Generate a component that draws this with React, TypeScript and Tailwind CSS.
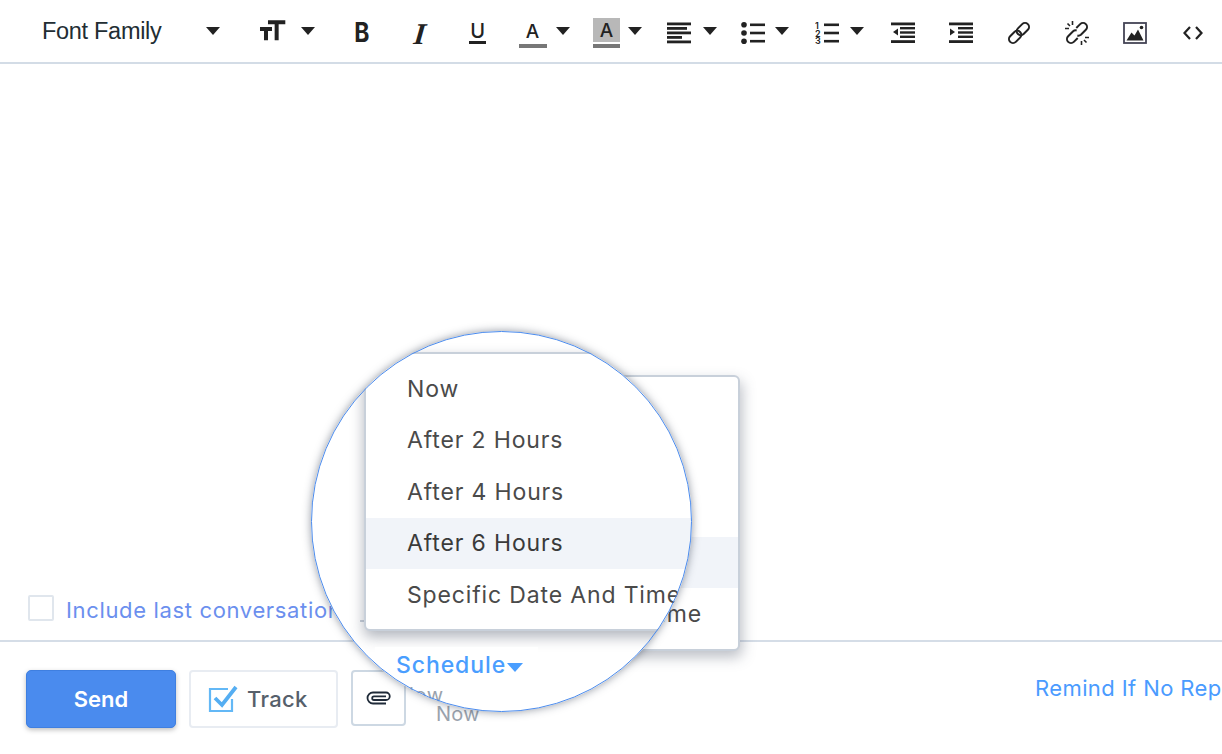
import React from "react";
import { MdFormatSize } from "react-icons/md";

const Caret = ({ className = "" }: { className?: string }) => (
  <svg width="14" height="8" viewBox="0 0 14 8" className={className}>
    <path d="M0 0h14L7 8z" fill="#222" />
  </svg>
);

const IconBox = ({ children, className = "" }: { children: React.ReactNode; className?: string }) => (
  <span className={`mt-[4px] flex h-[40px] items-center justify-center ${className}`}>{children}</span>
);

const AlignIcon = () => (
  <svg width="24" height="22" viewBox="0 0 24 22" fill="#222">
    <rect x="0" y="0.500" width="24" height="2.800" />
    <rect x="0" y="5" width="20" height="2.800" />
    <rect x="0" y="9.500" width="24" height="2.800" />
    <rect x="0" y="14" width="15" height="2.800" />
    <rect x="0" y="18.500" width="24" height="2.800" />
  </svg>
);

const BulletIcon = () => (
  <svg width="24" height="22" viewBox="0 0 24 22" fill="#222">
    <circle cx="3" cy="2.800" r="2.800" />
    <circle cx="3" cy="11" r="2.800" />
    <circle cx="3" cy="19.200" r="2.800" />
    <rect x="9" y="1.500" width="15" height="2.600" />
    <rect x="9" y="9.700" width="15" height="2.600" />
    <rect x="9" y="17.900" width="15" height="2.600" />
  </svg>
);

const NumberIcon = () => (
  <svg width="24" height="26" viewBox="0 0 24 26" fill="#222">
    <text x="0" y="9" fontSize="9" fontWeight="600" fontFamily="Inter, sans-serif">1</text>
    <text x="0" y="16.500" fontSize="9" fontWeight="600" fontFamily="Inter, sans-serif">2</text>
    <text x="0" y="24" fontSize="9" fontWeight="600" fontFamily="Inter, sans-serif">3</text>
    <rect x="9" y="3.500" width="15" height="2.600" />
    <rect x="9" y="11.700" width="15" height="2.600" />
    <rect x="9" y="19.900" width="15" height="2.600" />
  </svg>
);

const IndentIcon = ({ dir }: { dir: "in" | "out" }) => (
  <svg width="24" height="22" viewBox="0 0 24 22" fill="#222">
    <rect x="0" y="0.500" width="24" height="2.800" />
    <rect x="9" y="5" width="15" height="2.400" />
    <rect x="9" y="9.300" width="15" height="2.400" />
    <rect x="9" y="13.600" width="15" height="2.400" />
    <rect x="0" y="18.200" width="24" height="2.800" />
    {dir === "out" ? <path d="M7 6.500v7L2 10z" /> : <path d="M1 6.500v7L6 10z" />}
  </svg>
);

const LinkIcon = () => (
  <svg width="26" height="26" viewBox="0 0 26 26" fill="none" stroke="#222" strokeWidth="2">
    <g transform="rotate(45 13 13)">
      <rect x="9" y="0.500" width="8" height="14" rx="4" />
      <rect x="9" y="11.500" width="8" height="14" rx="4" />
    </g>
  </svg>
);

const UnlinkIcon = () => (
  <svg width="26" height="26" viewBox="0 0 26 26" fill="none" stroke="#222" strokeWidth="2">
    <g transform="rotate(45 13 13)">
      <path d="M9 10V4.500a4 4 0 0 1 8 0v7a4 4 0 0 1-2 3" />
      <path d="M17 16v5.500a4 4 0 0 1-8 0v-7a4 4 0 0 1 2-3" />
    </g>
    <path d="M8.500 1v4M1 8.500h4M3.500 3.500l2.500 2.500M25 17.500h-4M17.500 25v-4M22.500 22.500L20 20" strokeWidth="1.600" />
  </svg>
);

const ImageIcon = () => (
  <svg width="24" height="22" viewBox="0 0 24 22">
    <rect x="1" y="1" width="22" height="20" fill="none" stroke="#445" strokeWidth="1.800" />
    <path d="M3.500 18.500l5-8 3 3 3.500-6 5.500 11z" fill="#222" />
    <circle cx="18.500" cy="5.500" r="1.800" fill="#222" />
  </svg>
);

const CodeIcon = () => (
  <svg width="20" height="14" viewBox="0 0 20 14" fill="none" stroke="#222" strokeWidth="2.200">
    <path d="M7 1L1.500 7 7 13M13 1l5.500 6L13 13" />
  </svg>
);

const ClipIcon = () => (
  <svg width="26" height="14" viewBox="0 0 26 14" fill="none" stroke="#1f2a38" strokeWidth="1.800">
    <path d="M20 12.500H7a5.500 5.500 0 0 1 0-11h13a3.750 3.750 0 0 1 0 7.500H8a1.800 1.800 0 0 1 0-3.600h12" />
  </svg>
);

const TrackIcon = () => (
  <svg width="30" height="30" viewBox="0 0 30 30" fill="none">
    <path d="M24 15v12H2V5h18" stroke="#63b8f6" strokeWidth="2.200" />
    <path d="M7 14l7 7L28 3" stroke="#55aef2" strokeWidth="3.800" />
  </svg>
);

const items = ["Now", "After 2 Hours", "After 4 Hours", "After 6 Hours", "Specific Date And Time"];

const Menu = ({ className }: { className: string }) => (
  <div className={className}>
    {items.map((t, i) => (
      <div
        key={t}
        className={`flex h-[51.5px] items-center whitespace-nowrap pl-[41px] text-[23px] tracking-[0.85px] ${
          i === 3 ? "bg-[#f1f4f9] text-[#3a3a3a]" : "text-[#4a4a4a]"
        }`}
      >
        {t}
      </div>
    ))}
  </div>
);

const sans = { fontFamily: 'Inter, "Noto Sans", sans-serif' };

export default function App() {
  return (
    <div style={sans} className="relative flex h-[754px] w-[1222px] flex-col overflow-hidden bg-white">
      <div className="flex h-[64px] shrink-0 items-center border-b-2 border-[#d3dce6] pl-[42px]">
        <span
          className="mt-[2px] w-[164px] whitespace-nowrap text-[23.500px] tracking-[-0.3px] text-[#222d33]"
          style={{ fontFamily: '"Liberation Sans", Arial, sans-serif' }}
        >
          Font Family
        </span>
        <Caret />
        <MdFormatSize size={32} className="ml-[36px] text-[#222]" />
        <Caret className="ml-[13px]" />
        <IconBox className="ml-[18px] w-[58px]">
          <span className="scale-x-[0.85] text-[27px] font-bold text-[#222]">B</span>
        </IconBox>
        <IconBox className="w-[58px]">
          <span className="-skew-x-6 text-[30px] font-bold italic text-[#222]" style={{ fontFamily: '"Liberation Serif", serif' }}>I</span>
        </IconBox>
        <IconBox className="w-[58px]">
          <span className="border-b-[3px] border-[#222] px-[1px] text-[20px] font-medium leading-[19px] text-[#222]">U</span>
        </IconBox>
        <span className="ml-[12px] mt-[4px] flex h-[30px] w-[28px] flex-col items-center justify-end border-b-[4px] border-[#777] pb-[1px] text-[19px] font-medium leading-[22px] text-[#222]">
          A
        </span>
        <Caret className="ml-[9px]" />
        <span className="ml-[23px] mt-[4px] flex h-[30px] w-[28px] flex-col border-b-[4px] border-[#777]">
          <span className="flex h-[24px] items-end justify-center bg-[#b8b8b8] text-[19px] font-medium leading-[22px] text-[#222]">A</span>
        </span>
        <Caret className="ml-[8px]" />
        <span className="ml-[25px] mt-[4px] flex"><AlignIcon /></span>
        <Caret className="ml-[12px]" />
        <span className="ml-[24px] mt-[4px] flex"><BulletIcon /></span>
        <Caret className="ml-[10px]" />
        <span className="ml-[26px] mt-[4px] flex"><NumberIcon /></span>
        <Caret className="ml-[11px]" />
        <IconBox className="ml-[10px] w-[58px]"><IndentIcon dir="out" /></IconBox>
        <IconBox className="w-[58px]"><IndentIcon dir="in" /></IconBox>
        <IconBox className="w-[58px]"><LinkIcon /></IconBox>
        <IconBox className="w-[58px]"><UnlinkIcon /></IconBox>
        <IconBox className="w-[58px]"><ImageIcon /></IconBox>
        <IconBox className="w-[58px]"><CodeIcon /></IconBox>
      </div>

      <div className="flex flex-1 flex-col justify-end pb-[19px] pl-[28px]">
        <div className="flex h-[26px] items-center gap-[12px]">
          <span className="h-[26px] w-[26px] rounded-[2px] border-2 border-[#e0e6ed]" />
          <span className="translate-y-[2px] whitespace-nowrap text-[22px] tracking-[0.65px] text-[#6b8fee]">Include last conversation</span>
        </div>
      </div>

      <div className="flex h-[114px] shrink-0 items-start border-t-2 border-[#d5dde7] pl-[26px] pt-[28px]">
        <button className="h-[58px] w-[150px] rounded-[5px] border border-[#3f7fe0] bg-[#4a8bee] text-[22px] font-semibold text-white shadow-[0_2px_5px_rgba(0,0,0,0.25)]">
          Send
        </button>
        <div className="ml-[13px] flex h-[58px] w-[149px] items-center gap-[9px] rounded-[4px] border-2 border-[#e8ecf2] pl-[17px]">
          <TrackIcon />
          <span className="text-[22px] font-medium tracking-[0.3px] text-[#56606b]">Track</span>
        </div>
        <div className="ml-[13px] flex h-[56px] w-[55px] items-center justify-center rounded-[4px] border-2 border-[#cdd8e3]">
          <ClipIcon />
        </div>
        <span className="ml-[30px] mt-[29px] text-[20px] tracking-[0.3px] text-[#9aa3ad]">Now</span>
        <span className="ml-auto mt-[2px] w-[187px] overflow-hidden whitespace-nowrap text-[22px] tracking-[0.4px] text-[#4a9bff]">
          Remind If No Reply
        </span>
      </div>

      <Menu className="absolute left-[385px] top-[375px] h-[276px] w-[355px] rounded-[6px] border-2 border-[#c8d0da] bg-white pt-[5px] shadow-[2px_6px_14px_rgba(60,70,90,0.35)]" />

      <div className="absolute left-[311px] top-[331px] h-[381px] w-[381px] overflow-hidden rounded-full bg-white">
        <div className="absolute left-[49px] top-[289px] h-[2px] w-[6px] bg-[#c8d0da]" />
        <Menu className="absolute left-[53px] top-[21px] h-[279px] w-[400px] rounded-[6px] border-2 border-[#c8d0da] bg-white pt-[9px] shadow-[0_6px_14px_rgba(60,70,90,0.4)]" />
        <div className="absolute left-[64px] top-[316px] h-[70px] w-[163px] bg-white" />
        <div className="absolute left-[85px] top-[317px] flex items-center">
          <span className="text-[23px] font-medium tracking-[0.9px] text-[#4a9eff]">Schedule</span>
          <svg width="16" height="9" viewBox="0 0 16 9" className="ml-[1px] mt-[5px]">
            <path d="M0 0h16L8 9z" fill="#4a9eff" />
          </svg>
        </div>
        <span className="absolute left-[88px] top-[349px] text-[20px] tracking-[0.5px] text-[#9aa3ad]">Now</span>
      </div>
      <div className="pointer-events-none absolute left-[311px] top-[331px] h-[381px] w-[381px] rounded-full border border-[#4a8bee] shadow-[0_0_8px_rgba(40,50,70,0.5)]" />
    </div>
  );
}
